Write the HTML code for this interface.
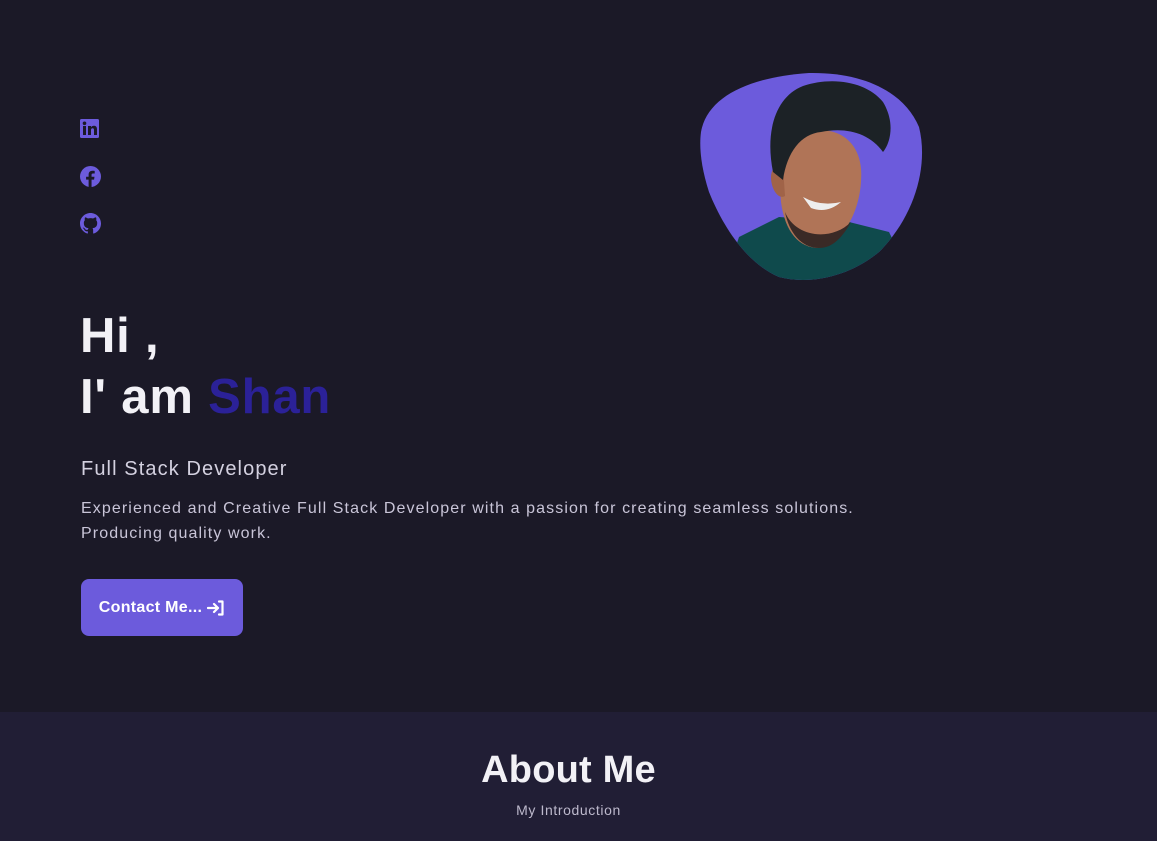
<!DOCTYPE html>
<html><head><meta charset="utf-8"><style>
*{margin:0;padding:0;box-sizing:border-box}
body{width:1157px;height:841px;overflow:hidden;background:#1b1927;font-family:"Liberation Sans",sans-serif;position:relative}
.abs{position:absolute}
.h{left:80px;top:306px;color:#f2f1f6;font-size:49px;font-weight:bold;line-height:61px;letter-spacing:0.8px}
.h span{color:#2b2198}
.sub{left:81px;top:458px;color:#d4d1e0;font-size:20px;letter-spacing:1.1px}
.desc{left:81px;top:496px;color:#c9c5d8;font-size:16px;line-height:25px;width:800px;letter-spacing:1.1px}
.btn{left:81px;top:579px;width:162px;height:57px;background:#6c5bdc;border-radius:8px;color:#fff;font-weight:bold;font-size:16px;display:flex;align-items:center;justify-content:center;gap:5px;letter-spacing:0.3px}
.about{left:0;top:712px;width:1157px;height:129px;background:#211e35;text-align:center;padding-right:20px}
.about h2{color:#f2f1f6;font-size:38px;margin-top:37px;letter-spacing:0.2px}
.about p{color:#bdb9cc;font-size:14px;margin-top:10px;letter-spacing:0.6px}
</style></head><body>
<svg class="abs" style="left:80px;top:119px" width="20" height="20" viewBox="0 0 20 20"><rect x="0" y="0" width="19" height="19" rx="1.5" fill="#6c5bdc"/><rect x="3" y="7" width="3" height="9" fill="#1b1927"/><circle cx="4.5" cy="4.3" r="1.8" fill="#1b1927"/><path d="M8 7h3v1.3c.6-1 1.6-1.5 3-1.5 2.2 0 3 1.4 3 3.8V16h-3v-5c0-1.2-.4-1.8-1.4-1.8S11 9.9 11 11v5H8z" fill="#1b1927"/></svg>
<svg class="abs" style="left:80px;top:166px" width="21" height="21" viewBox="0 0 20 20"><circle cx="10" cy="10" r="10" fill="#6c5bdc"/><path d="M11 20v-7h2.4l.4-2.8H11V8.5c0-.8.3-1.4 1.4-1.4H14V4.6c-.3 0-1.2-.1-2.2-.1-2.2 0-3.6 1.3-3.6 3.7v2H5.8V13h2.4v7z" fill="#1b1927"/></svg>
<svg class="abs" style="left:80px;top:213px" width="21" height="21" viewBox="0 0 16 16"><path fill="#6c5bdc" d="M8 0C3.58 0 0 3.58 0 8c0 3.54 2.29 6.53 5.47 7.59.4.07.55-.17.55-.38v-1.34c-2.23.48-2.7-1.07-2.7-1.07-.36-.92-.89-1.17-.89-1.17-.73-.5.06-.49.06-.49.8.06 1.23.83 1.23.83.72 1.23 1.87.87 2.33.67.07-.52.28-.87.51-1.07-1.78-.2-3.64-.89-3.64-3.95 0-.87.31-1.59.82-2.15-.08-.2-.36-1.02.08-2.12 0 0 .67-.21 2.2.82a7.5 7.5 0 014 0c1.53-1.04 2.2-.82 2.2-.82.44 1.1.16 1.92.08 2.12.51.56.82 1.27.82 2.15 0 3.07-1.87 3.75-3.65 3.95.29.25.54.73.54 1.48v2.2c0 .21.15.46.55.38A8.01 8.01 0 0016 8c0-4.42-3.58-8-8-8z"/></svg>

<svg class="abs" style="left:699px;top:72px" width="226" height="211" viewBox="0 0 226 211">
<defs><clipPath id="c"><path d="M2 60C8 25 50 5 110 1 165 0 205 20 220 55 230 95 215 145 180 180 150 205 110 213 80 205 45 190 22 150 10 120 2 95 0 75 2 60Z"/></clipPath></defs>
<g clip-path="url(#c)">
<rect width="226" height="211" fill="#6c5bdc"/>
<path d="M25 211 40 165 80 145 150 150 190 160 215 211Z" fill="#0f4a4c"/>
<path d="M82 130C80 95 90 62 120 58 150 58 165 80 162 110 160 140 145 170 120 176 100 176 86 160 82 130Z" fill="#b07457"/>
<path d="M72 105C72 118 80 128 86 124L84 95C77 92 72 97 72 105Z" fill="#a06348"/>
<path d="M120 176C102 176 90 160 86 140 96 165 132 170 152 150 142 168 132 176 120 176Z" fill="#3a2a26"/>
<path d="M74 100C66 60 76 25 104 14 134 4 168 10 184 30 196 50 192 70 184 80 170 60 145 55 122 60 102 62 88 80 84 108Z" fill="#1c2226"/>
<path d="M104 125Q122 135 142 130Q128 142 112 136Z" fill="#eee"/>
</g></svg>

<div class="abs h">Hi ,<br>I' am <span>Shan</span></div>
<div class="abs sub">Full Stack Developer</div>
<div class="abs desc">Experienced and Creative Full Stack Developer with a passion for creating seamless solutions.<br>Producing quality work.</div>
<div class="abs btn">Contact Me... <svg width="18" height="16" viewBox="0 0 18 16"><path d="M1 8h10M7 4l4 4-4 4M12 1.5h3.5v13H12" stroke="#fff" stroke-width="2.2" fill="none" stroke-linecap="round" stroke-linejoin="round"/></svg></div>
<div class="abs about"><h2>About Me</h2><p>My Introduction</p></div>
</body></html>
